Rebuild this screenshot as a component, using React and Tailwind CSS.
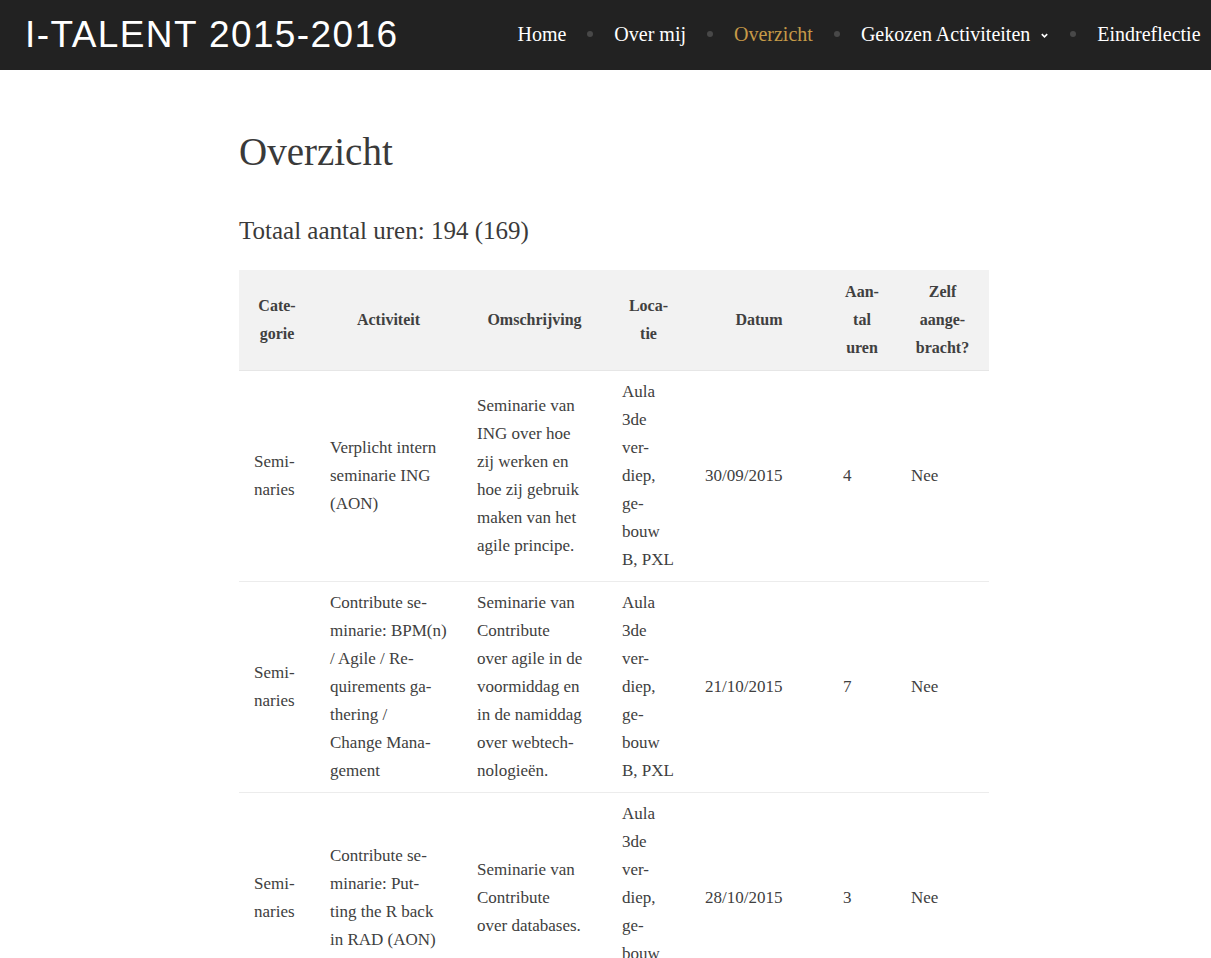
import React from 'react';

const navItems = [
  { label: 'Home' },
  { label: 'Over mij' },
  { label: 'Overzicht', active: true },
  { label: 'Gekozen Activiteiten', caret: true },
  { label: 'Eindreflectie' },
];

const columns = [
  { lines: ['Cate-', 'gorie'], width: 'w-[76px]' },
  { lines: ['Activiteit'], width: 'w-[147px]' },
  { lines: ['Omschrijving'], width: 'w-[145px]' },
  { lines: ['Loca-', 'tie'], width: 'w-[83px]' },
  { lines: ['Datum'], width: 'w-[138px]' },
  { lines: ['Aan-', 'tal', 'uren'], width: 'w-[68px]' },
  { lines: ['Zelf', 'aange-', 'bracht?'], width: 'w-[93px]' },
];

const locatie = ['Aula', '3de', 'ver-', 'diep,', 'ge-', 'bouw', 'B, PXL'];

const rows = [
  {
    cells: [
      ['Semi-', 'naries'],
      ['Verplicht intern', 'seminarie ING', '(AON)'],
      ['Seminarie van', 'ING over hoe', 'zij werken en', 'hoe zij gebruik', 'maken van het', 'agile principe.'],
      locatie,
      ['30/09/2015'],
      ['4'],
      ['Nee'],
    ],
  },
  {
    cells: [
      ['Semi-', 'naries'],
      ['Contribute se-', 'minarie: BPM(n)', '/ Agile / Re-', 'quirements ga-', 'thering /', 'Change Mana-', 'gement'],
      ['Seminarie van', 'Contribute', 'over agile in de', 'voormiddag en', 'in de namiddag', 'over webtech-', 'nologieën.'],
      locatie,
      ['21/10/2015'],
      ['7'],
      ['Nee'],
    ],
  },
  {
    cells: [
      ['Semi-', 'naries'],
      ['Contribute se-', 'minarie: Put-', 'ting the R back', 'in RAD (AON)'],
      ['Seminarie van', 'Contribute', 'over databases.'],
      locatie,
      ['28/10/2015'],
      ['3'],
      ['Nee'],
    ],
  },
];

const Lines = ({ lines }) =>
  lines.map((l, i) => (
    <React.Fragment key={i}>
      {i > 0 && <br />}
      {l}
    </React.Fragment>
  ));

export default function App() {
  return (
    <div className="min-h-screen bg-white font-['Liberation_Serif',serif] text-[#404040]">
      {/* Top bar */}
      <header className="flex h-[70px] items-center overflow-hidden whitespace-nowrap bg-[#222222]">
        <div className="pl-[25px] font-['Liberation_Sans',sans-serif] text-[37px] tracking-[1.4px] text-white">
          I-TALENT 2015-2016
        </div>
        <nav className="ml-[119px] flex shrink-0 items-center pb-[2px] text-[20px] text-white">
          {navItems.map((item, i) => (
            <div key={item.label} className="flex items-center">
              {i > 0 && <span className="mx-[21px] h-[6px] w-[6px] rounded-full bg-[#484848]" />}
              <span className={item.active ? 'text-[#c69a48]' : ''}>{item.label}</span>
              {item.caret && (
                <svg className="ml-[10px] mt-[2px] h-[9px] w-[9px]" viewBox="0 0 10 10" fill="none" stroke="currentColor" strokeWidth="1.8">
                  <path d="M2 3.5 L5 6.5 L8 3.5" />
                </svg>
              )}
            </div>
          ))}
        </nav>
      </header>

      {/* Content */}
      <main className="ml-[239px] w-[750px] pt-[55px]">
        <h1 className="text-[39px] leading-[54px] text-[#3a3a3a]">Overzicht</h1>
        <h2 className="mt-[35px] text-[25px] leading-[34px] text-[#3a3a3a]">Totaal aantal uren: 194 (169)</h2>

        <table className="mt-[22px] w-[750px] table-fixed border-collapse">
          <thead>
            <tr className="bg-[#f2f2f2] border-b border-[#e6e6e6]">
              {columns.map((c, i) => (
                <th key={i} className={`${c.width} px-[6px] py-[8px] text-center align-middle text-[16px] leading-[28px] font-bold whitespace-nowrap text-[#404040]`}>
                  <Lines lines={c.lines} />
                </th>
              ))}
            </tr>
          </thead>
          <tbody>
            {rows.map((r, ri) => (
              <tr key={ri} className="border-b border-[#ececec]">
                {r.cells.map((lines, ci) => (
                  <td key={ci} className="px-[15px] py-[7px] align-middle text-[17px] leading-[28px] whitespace-nowrap">
                    <Lines lines={lines} />
                  </td>
                ))}
              </tr>
            ))}
          </tbody>
        </table>
      </main>
    </div>
  );
}
